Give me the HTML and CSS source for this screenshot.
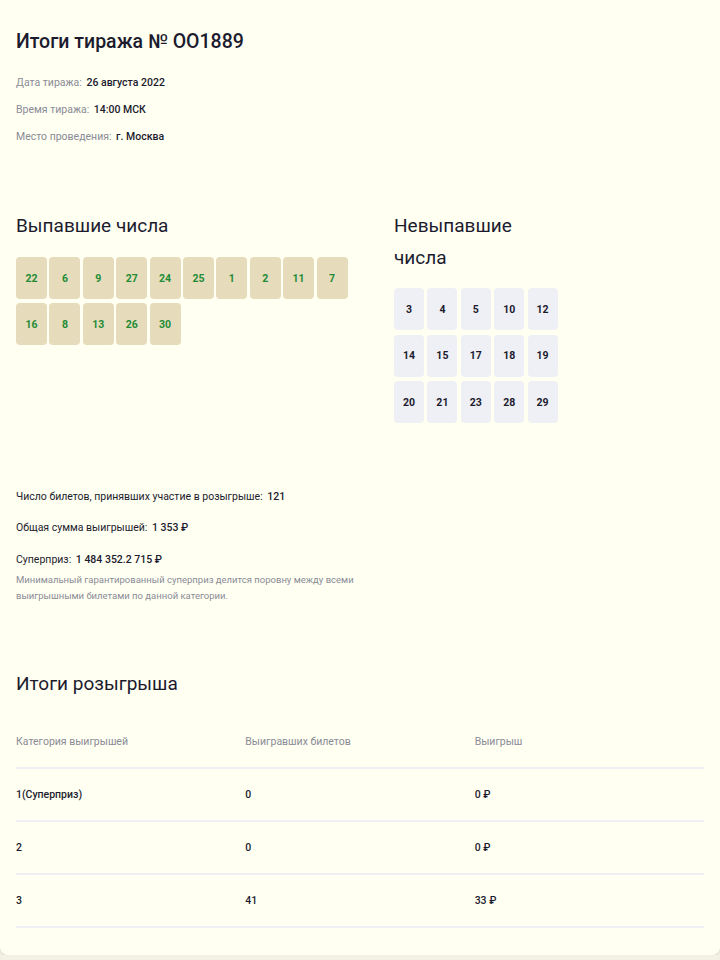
FILE: index.html
```html
<!doctype html>
<html lang="ru">
<head>
    <meta charset="UTF-8">
    <meta name="viewport" content="width=device-width, initial-scale=1.0">
    <title>Итоги тиража № OO1889</title>
    <link rel="stylesheet" href="styles.css">
</head>
<body>
    <div class="card">
        <h1>Итоги тиража № OO1889</h1>

        <div class="info">
            <p><span class="label">Дата тиража:</span> <span class="value">26 августа 2022</span></p>
            <p><span class="label">Время тиража:</span> <span class="value">14:00 МСК</span></p>
            <p><span class="label">Место проведения:</span> <span class="value">г. Москва</span></p>
        </div>

        <div class="numbers">
            <div class="numbers-col drawn">
                <h2>Выпавшие числа</h2>
                <div class="balls">
                    <div class="ball">22</div>
                    <div class="ball">6</div>
                    <div class="ball">9</div>
                    <div class="ball">27</div>
                    <div class="ball">24</div>
                    <div class="ball">25</div>
                    <div class="ball">1</div>
                    <div class="ball">2</div>
                    <div class="ball">11</div>
                    <div class="ball">7</div>
                    <div class="ball">16</div>
                    <div class="ball">8</div>
                    <div class="ball">13</div>
                    <div class="ball">26</div>
                    <div class="ball">30</div>
                </div>
            </div>
            <div class="numbers-col missed">
                <h2>Невыпавшие числа</h2>
                <div class="balls">
                    <div class="ball">3</div>
                    <div class="ball">4</div>
                    <div class="ball">5</div>
                    <div class="ball">10</div>
                    <div class="ball">12</div>
                    <div class="ball">14</div>
                    <div class="ball">15</div>
                    <div class="ball">17</div>
                    <div class="ball">18</div>
                    <div class="ball">19</div>
                    <div class="ball">20</div>
                    <div class="ball">21</div>
                    <div class="ball">23</div>
                    <div class="ball">28</div>
                    <div class="ball">29</div>
                </div>
            </div>
        </div>

        <div class="stats">
            <p>Число билетов, принявших участие в розыгрыше: <b>121</b></p>
            <p>Общая сумма выигрышей: <b>1 353 ₽</b></p>
            <p class="super">Суперприз: <b>1 484 352.2 715 ₽</b></p>
            <p class="note">Минимальный гарантированный суперприз делится поровну между всеми выигрышными билетами по данной категории.</p>
        </div>

        <h2 class="results-title">Итоги розыгрыша</h2>
        <table class="results">
            <thead>
                <tr>
                    <th>Категория выигрышей</th>
                    <th>Выигравших билетов</th>
                    <th>Выигрыш</th>
                </tr>
            </thead>
            <tbody>
                <tr>
                    <td>1(Суперприз)</td>
                    <td>0</td>
                    <td>0 ₽</td>
                </tr>
                <tr>
                    <td>2</td>
                    <td>0</td>
                    <td>0 ₽</td>
                </tr>
                <tr>
                    <td>3</td>
                    <td>41</td>
                    <td>33 ₽</td>
                </tr>
            </tbody>
        </table>
    </div>
</body>
</html>
```

FILE: styles.css
```css
body {
    margin: 0;
    background: #f3f1e4;
    font-family: Roboto, "Liberation Sans", sans-serif;
    color: #1c1b2e;
}
.card {
    background: #fffff2;
    padding: 28px 16px 0;
    border-radius: 0 0 8px 8px;
    box-shadow: 0 1px 3px rgba(0, 0, 0, 0.12);
    height: 927px;
}
h1 {
    margin: 0;
    font-size: 19.5px;
    font-weight: 500;
    line-height: 28px;
}
h2 {
    margin: 0;
    font-size: 19px;
    font-weight: 400;
    line-height: 32px;
}
.info {
    margin-top: 13px;
}
.info p {
    margin: 0;
    font-size: 10.5px;
    line-height: 27px;
}
.info .label {
    color: #8a8b96;
}
.info .value {
    font-weight: 500;
    margin-left: 2px;
}
.numbers {
    display: flex;
    margin-top: 60px;
}
.numbers-col h2 {
    margin-bottom: 15px;
}
.drawn {
    width: 378px;
}
.drawn .balls {
    width: 340px;
}
.missed {
    width: 170px;
}
.missed h2 {
    width: 130px;
    margin-bottom: 14px;
}
.balls {
    display: flex;
    flex-wrap: wrap;
    gap: 4px 2.4px;
}
.missed .balls {
    gap: 4.7px 3.4px;
}
.ball {
    width: 31px;
    height: 42px;
    border-radius: 4px;
    display: flex;
    align-items: center;
    justify-content: center;
    font-size: 10.5px;
    font-weight: 700;
}
.drawn .ball {
    background: #e6dcbc;
    color: #238b35;
}
.missed .ball {
    width: 30px;
    background: #eff0f5;
    color: #1c1b2e;
}
.stats {
    margin-top: 58px;
}
.stats p {
    margin: 0;
    font-size: 10.5px;
    line-height: 31px;
}
.stats b {
    font-weight: 500;
    margin-left: 2px;
}
.stats .super {
    line-height: 33px;
}
.stats .note {
    width: 340px;
    color: #8a8b96;
    font-size: 9.5px;
    line-height: 16px;
    margin-top: -4px;
}
.results-title {
    margin-top: 64px;
}
.results {
    width: 100%;
    margin-top: 16px;
    border-collapse: collapse;
    table-layout: fixed;
}
.results th,
.results td {
    text-align: left;
    padding: 0;
    height: 51px;
    font-size: 10.5px;
    border-bottom: 2px solid #eef0f5;
}
.results th {
    font-weight: 400;
    color: #8a8b96;
}
.results td {
    font-weight: 500;
}
```
